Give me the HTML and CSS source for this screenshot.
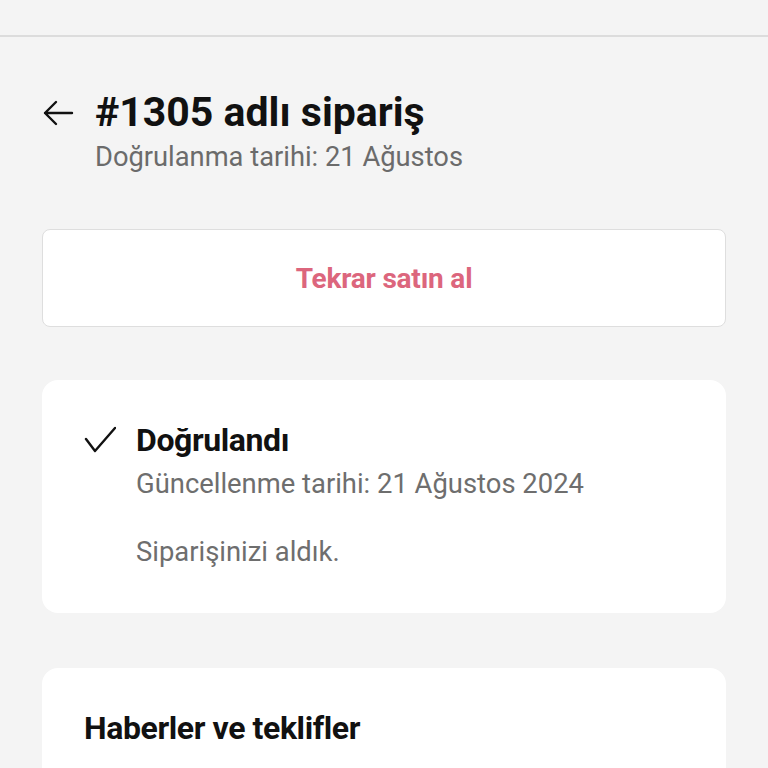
FILE: index.html
```html
<!DOCTYPE html>
<html lang="tr">
<head>
  <meta charset="UTF-8">
  <meta name="viewport" content="width=device-width, initial-scale=1">
  <title>#1305 adlı sipariş</title>
  <link rel="stylesheet" href="styles.css">
</head>
<body>
  <div class="topbar"></div>

  <div class="page">
    <div class="header">
      <svg class="back" width="32" height="32" viewBox="0 0 32 32" fill="none" stroke="#111" stroke-width="2.4" stroke-linecap="round" stroke-linejoin="round">
        <path d="M30 16H3M14 5L3 16l11 11"/>
      </svg>
      <div>
        <h1>#1305 adlı sipariş</h1>
        <p class="sub">Doğrulanma tarihi: 21 Ağustos</p>
      </div>
    </div>

    <button class="rebuy">Tekrar satın al</button>

    <div class="card status">
      <svg class="check" width="32" height="28" viewBox="0 0 32 28" fill="none" stroke="#111" stroke-width="2.4" stroke-linecap="round" stroke-linejoin="round">
        <path d="M2 13l9 12L31 2"/>
      </svg>
      <div>
        <h2>Doğrulandı</h2>
        <p class="muted">Güncellenme tarihi: 21 Ağustos 2024</p>
        <p class="muted note">Siparişinizi aldık.</p>
      </div>
    </div>

    <div class="card news">
      <h2>Haberler ve teklifler</h2>
    </div>
  </div>
</body>
</html>
```

FILE: styles.css
```css
body {
  margin: 0;
  background: #f4f4f4;
  font-family: Roboto, 'Liberation Sans', sans-serif;
  color: #111;
}
.topbar {
  height: 35px;
  border-bottom: 2px solid #dcdcdc;
}
.page {
  padding: 51px 42px 0;
}
.header {
  display: flex;
  align-items: flex-start;
  gap: 21px;
}
.back {
  margin-top: 9px;
  flex-shrink: 0;
}
h1 {
  margin: 0;
  font-size: 41px;
  font-weight: 700;
  line-height: 48px;
}
.sub {
  margin: 5px 0 0;
  font-size: 27.3px;
  line-height: 32px;
  color: #6b6b6b;
}
.rebuy {
  display: block;
  width: 100%;
  height: 98px;
  margin-top: 56px;
  background: white;
  border: 1px solid #dedede;
  border-radius: 8px;
  font-family: inherit;
  font-size: 28px;
  font-weight: 700;
  color: #dc667d;
  letter-spacing: -0.2px;
  cursor: pointer;
}
.card {
  background: white;
  border-radius: 16px;
  margin-top: 53px;
}
.status {
  display: flex;
  gap: 20px;
  padding: 40px 42px 0;
  height: 233px;
  box-sizing: border-box;
}
.check {
  margin-top: 6px;
  flex-shrink: 0;
}
h2 {
  margin: 0;
  font-size: 32px;
  font-weight: 700;
  line-height: 40px;
  letter-spacing: -0.4px;
}
.muted {
  margin: 6px 0 0;
  font-size: 27.4px;
  line-height: 36px;
  color: #6e6e6e;
}
.note {
  margin-top: 32px;
}
.news {
  margin-top: 55px;
  padding: 40px 42px 60px;
}
```
